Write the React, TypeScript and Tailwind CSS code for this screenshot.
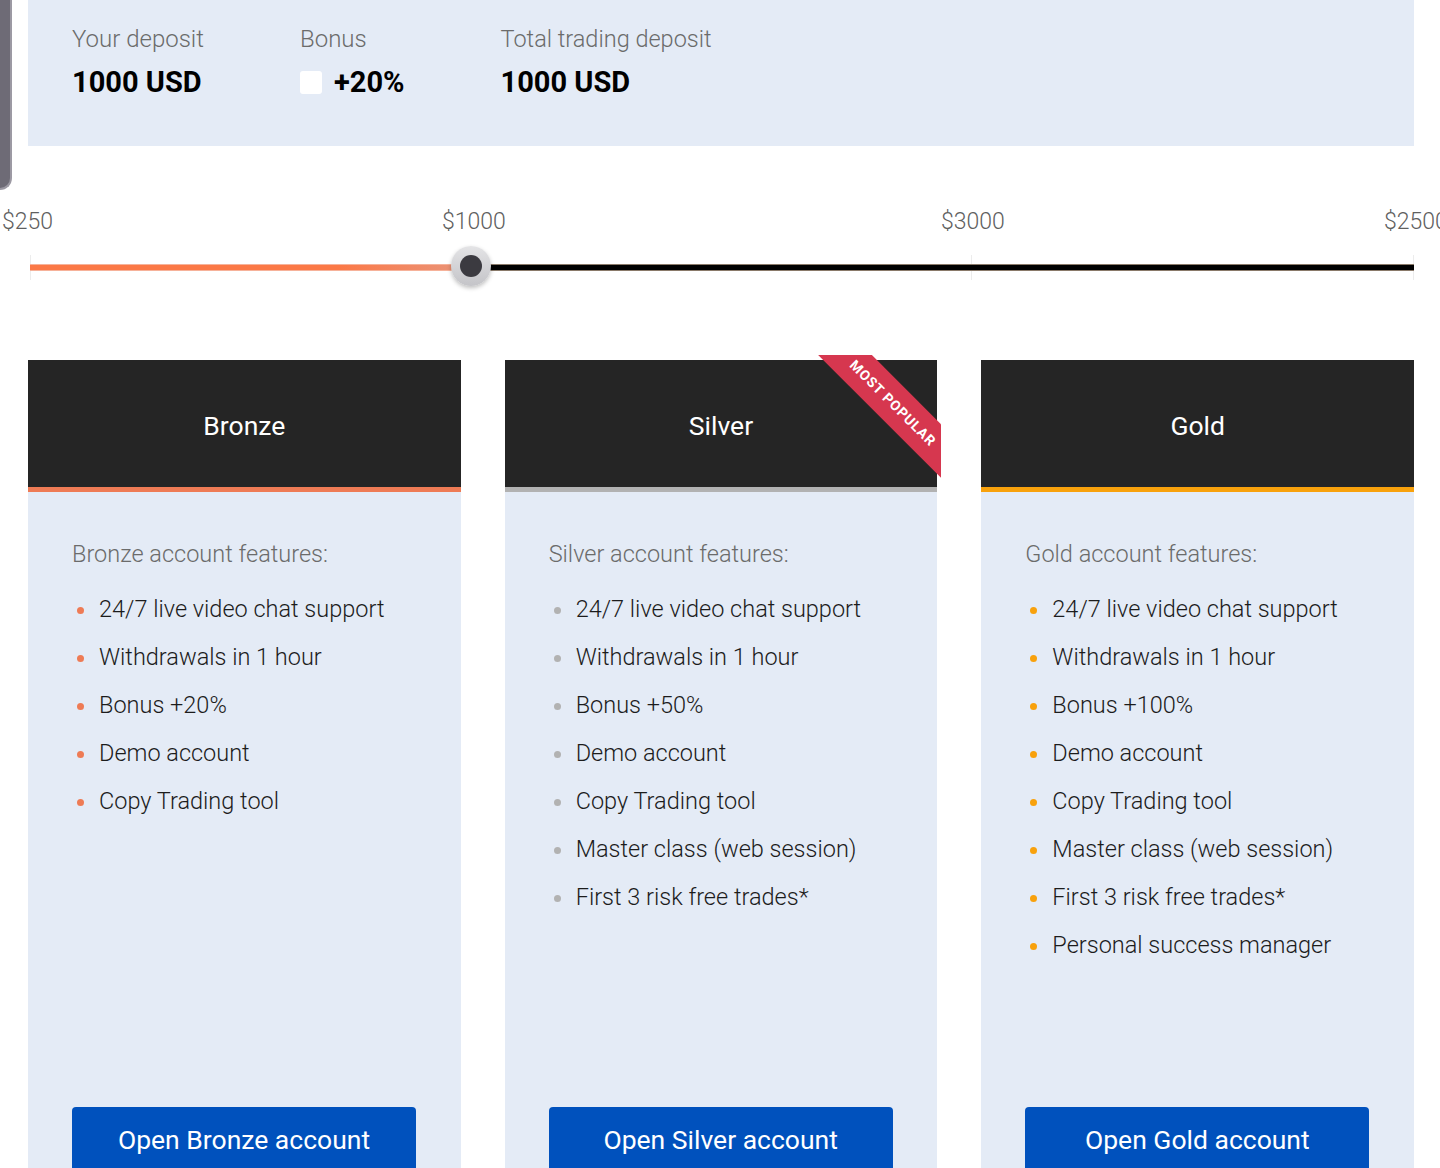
import React from "react";

type Plan = {
  name: string;
  accent: string;
  features: string[];
  popular?: boolean;
};

const base = [
  "24/7 live video chat support",
  "Withdrawals in 1 hour",
];

const plans: Plan[] = [
  {
    name: "Bronze",
    accent: "bronze",
    features: [...base, "Bonus +20%", "Demo account", "Copy Trading tool"],
  },
  {
    name: "Silver",
    accent: "silver",
    popular: true,
    features: [
      ...base,
      "Bonus +50%",
      "Demo account",
      "Copy Trading tool",
      "Master class (web session)",
      "First 3 risk free trades*",
    ],
  },
  {
    name: "Gold",
    accent: "gold",
    features: [
      ...base,
      "Bonus +100%",
      "Demo account",
      "Copy Trading tool",
      "Master class (web session)",
      "First 3 risk free trades*",
      "Personal success manager",
    ],
  },
];

const borderClass: Record<string, string> = {
  bronze: "border-[#ee7b55]",
  silver: "border-[#b2b2b2]",
  gold: "border-[#f8a10c]",
};

const dotClass: Record<string, string> = {
  bronze: "bg-[#ee7b55]",
  silver: "bg-[#b2b2b2]",
  gold: "bg-[#f8a10c]",
};

function Ribbon() {
  return (
    <div className="pointer-events-none absolute -top-[5px] -right-[4px] h-[124px] w-[124px] overflow-hidden">
      <div className="absolute left-[-24px] top-[29px] flex h-[38px] w-[200px] rotate-45 items-center justify-center bg-[#d6374f] text-[14px] font-bold uppercase tracking-[0.8px] text-white">
        Most popular
      </div>
    </div>
  );
}

function PlanCard({ plan }: { plan: Plan }) {
  return (
    <div className="flex flex-col">
      <div
        className={`relative flex h-[132px] items-center justify-center border-b-[5px] bg-[#252525] pt-[5px] text-[26.5px] text-white ${borderClass[plan.accent]}`}
      >
        {plan.name}
        {plan.popular && <Ribbon />}
      </div>

      <div className="flex flex-1 flex-col bg-[#e4ebf6] px-[44px]">
        <div className="h-[615px] pt-[48px]">
          <div className="text-[23.5px] font-light leading-[28px] text-[#6b6b6b]">
            {plan.name} account features:
          </div>
          <ul className="mt-[18px]">
            {plan.features.map((f) => (
              <li
                key={f}
                className="flex h-[48px] items-center text-[23.5px] font-light text-[#1c1c1c]"
              >
                <span
                  className={`ml-[5px] mr-[15px] h-[7px] w-[7px] shrink-0 rounded-full ${dotClass[plan.accent]}`}
                />
                {f}
              </li>
            ))}
          </ul>
        </div>
        <button
          type="button"
          className="mb-[40px] h-[64px] w-[344px] rounded-[4px] bg-[#0051bd] pt-[1px] text-[26.5px] text-white"
        >
          Open {plan.name} account
        </button>
      </div>
    </div>
  );
}

function DepositSlider() {
  return (
    <div className="relative ml-[2px] h-[214px]">
      <span className="absolute left-[-28px] top-[62px] text-[23px] font-light leading-[28px] text-[#5f5f5f]">
        $250
      </span>
      <span className="absolute left-[412px] top-[62px] text-[23px] font-light leading-[28px] text-[#5f5f5f]">
        $1000
      </span>
      <span className="absolute left-[911px] top-[62px] text-[23px] font-light leading-[28px] text-[#5f5f5f]">
        $3000
      </span>
      <span className="absolute left-[1354px] top-[62px] whitespace-nowrap text-[23px] font-light leading-[28px] text-[#5f5f5f]">
        $2500
      </span>

      <span className="absolute left-0 top-[109px] h-[25px] w-px bg-[#ececec]" />
      <span className="absolute left-[941px] top-[109px] h-[25px] w-px bg-[#ececec]" />
      <span className="absolute left-[1383px] top-[109px] h-[25px] w-px bg-[#ececec]" />

      <div className="absolute left-0 right-0 top-[118px] flex h-[7px]">
        <div className="h-full w-[441px] border-y border-[#f6b29a] bg-gradient-to-r from-[#fb7846] from-70% to-[#e8957a]" />
        <div className="h-full flex-1 border-y border-[#8a7a6a] bg-black" />
      </div>

      <div className="absolute left-[421px] top-[100px] flex h-[40px] w-[40px] items-center justify-center rounded-full bg-gradient-to-b from-[#e4e4e6] to-[#c4c4c8] shadow-[0_2px_4px_rgba(0,0,0,0.25)]">
        <div className="h-[22px] w-[22px] rounded-full bg-[#3b3a40]" />
      </div>
    </div>
  );
}

export default function App() {
  return (
    <div className="relative h-[1168px] w-full overflow-hidden bg-white font-['Roboto',sans-serif]">
      <div className="absolute left-0 top-0 h-[190px] w-[12px] rounded-br-[12px] border-r-2 border-b-2 border-[#9c99a3] bg-[#6e6b76]" />

      <div className="pl-[28px] pr-[26px]">
        <div className="flex h-[146px] gap-[96px] bg-[#e4ebf6] px-[44px] pt-[25px]">
          <div>
            <div className="text-[24px] font-light leading-[28px] text-[#6b6b6b]">
              Your deposit
            </div>
            <div className="mt-[12px] text-[29px] font-bold leading-[34px] text-black">
              1000 USD
            </div>
          </div>
          <div>
            <div className="text-[24px] font-light leading-[28px] text-[#6b6b6b]">
              Bonus
            </div>
            <div className="mt-[12px] flex items-center gap-[12px] text-[29px] font-bold leading-[34px] text-black">
              <span className="h-[23px] w-[22px] rounded-[3px] bg-white" />
              +20%
            </div>
          </div>
          <div>
            <div className="text-[23.5px] font-light leading-[28px] text-[#6b6b6b]">
              Total trading deposit
            </div>
            <div className="mt-[12px] text-[29px] font-bold leading-[34px] text-black">
              1000 USD
            </div>
          </div>
        </div>

        <DepositSlider />

        <div className="grid grid-cols-3 gap-[44px]">
          {plans.map((p) => (
            <PlanCard key={p.name} plan={p} />
          ))}
        </div>
      </div>
    </div>
  );
}
